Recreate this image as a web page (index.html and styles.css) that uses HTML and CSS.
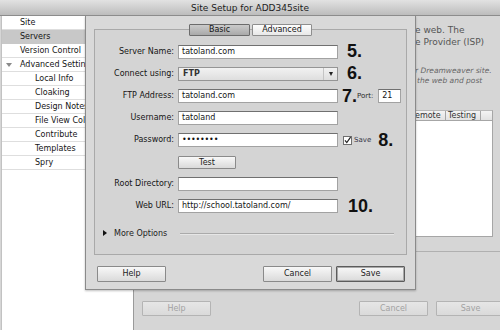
FILE: index.html
```html
<!DOCTYPE html>
<html>
<head>
<meta charset="utf-8">
<link rel="stylesheet" href="styles.css">
</head>
<body>
<div class="window">
  <div class="titlebar">Site Setup for ADD345site</div>
  <div class="body">
    <ul class="sidebar">
      <li>Site</li>
      <li class="sel">Servers</li>
      <li>Version Control</li>
      <li class="group"><span class="disc"></span>Advanced Settings</li>
      <li class="sub">Local Info</li>
      <li class="sub">Cloaking</li>
      <li class="sub">Design Notes</li>
      <li class="sub">File View Columns</li>
      <li class="sub">Contribute</li>
      <li class="sub">Templates</li>
      <li class="sub">Spry</li>
    </ul>
    <div class="panel">
      <div class="intro">
        <p>e web. The</p>
        <p>e Provider (ISP)</p>
      </div>
      <div class="note">
        <p>r Dreamweaver site.</p>
        <p class="indent">the web and post</p>
      </div>
      <div class="table">
        <div class="thead">
          <span class="th c1">emote</span>
          <span class="th c2">Testing</span>
        </div>
        <div class="tbody"></div>
        <div class="tfoot"></div>
      </div>
      <div class="panel-buttons">
        <span class="btn dis">Help</span>
        <span class="spacer"></span>
        <span class="btn dis">Cancel</span>
        <span class="btn dis">Save</span>
      </div>
    </div>
    <div class="sheet">
      <div class="tabs">
        <span class="tab active">Basic</span>
        <span class="tab">Advanced</span>
      </div>
      <div class="groupbox">
        <div class="form">
          <label class="lbl">Server Name:</label>
          <div class="field">tatoland.com</div>
          <div class="extra"><span class="num n5">5.</span></div>

          <label class="lbl">Connect using:</label>
          <div class="select"><span class="sel-text">FTP</span><span class="sel-arrow"><span class="tri-down"></span></span></div>
          <div class="extra"><span class="num n5">6.</span></div>

          <label class="lbl">FTP Address:</label>
          <div class="field">tatoland.com</div>
          <div class="extra"><span class="num">7.</span><span class="small">Port:</span><div class="field port">21</div></div>

          <label class="lbl">Username:</label>
          <div class="field">tatoland</div>
          <div class="extra"></div>

          <label class="lbl">Password:</label>
          <div class="field dots">••••••••</div>
          <div class="extra">
            <svg class="check" width="9" height="9" viewBox="0 0 9 9"><rect x="0.5" y="0.5" width="8" height="8" fill="#fff" stroke="#6f6f6f"/><path d="M2 4.3 L3.8 6.6 L7.6 1.2" fill="none" stroke="#222" stroke-width="1.2"/></svg>
            <span class="small save">Save</span><span class="num n8">8.</span>
          </div>

          <span class="lbl"></span>
          <div class="testrow"><span class="btn test">Test</span></div>
          <div class="extra"></div>

          <label class="lbl">Root Directory:</label>
          <div class="field"></div>
          <div class="extra"></div>

          <label class="lbl">Web URL:</label>
          <div class="field">http://school.tatoland.com/</div>
          <div class="extra"><span class="num n10">10.</span></div>
        </div>
        <div class="more">
          <span class="tri-right"></span>
          <span class="more-text">More Options</span>
          <span class="rule"></span>
        </div>
      </div>
      <div class="sheet-buttons">
        <span class="btn">Help</span>
        <span class="spacer"></span>
        <span class="btn">Cancel</span>
        <span class="btn default">Save</span>
      </div>
    </div>
  </div>
</div>
</body>
</html>
```
FILE: styles.css
```css
* { box-sizing: border-box; }
body {
  margin: 0;
  width: 500px;
  height: 330px;
  overflow: hidden;
  font-family: "DejaVu Sans", sans-serif;
  font-size: 8px;
  color: #151515;
  background: #d6d6d6;
}
p { margin: 0; }
.window {
  width: 500px;
  height: 330px;
  display: flex;
  flex-direction: column;
  overflow: hidden;
}
.titlebar {
  height: 16px;
  flex: none;
  padding-top: 1px;
  background: linear-gradient(#e2e2e2, #bcbcbc);
  border-bottom: 1px solid #8c8c8c;
  text-align: center;
  font-size: 9px;
  line-height: 14px;
  color: #1c1c1c;
}
.body {
  flex: 1;
  display: flex;
  position: relative;
  overflow: hidden;
}
.sidebar {
  width: 133px;
  flex: none;
  margin: 0 0 0 1px;
  padding: 0;
  list-style: none;
  background: #fff;
  border-left: 1px solid #c2c2c2;
  border-right: 1px solid #9a9a9a;
}
.sidebar li {
  height: 14px;
  line-height: 13px;
  border-bottom: 1px solid #dedede;
  padding-left: 18px;
  white-space: nowrap;
  overflow: hidden;
}
.sidebar li.sel { background: #c8c8c8; border-bottom-color: #c8c8c8; }
.sidebar li.group { padding-left: 4px; display: flex; align-items: center; }
.sidebar li.sub { padding-left: 33px; }
.disc {
  width: 0; height: 0;
  border-top: 4px solid #8a8a8a;
  border-left: 3px solid transparent;
  border-right: 3px solid transparent;
  margin-right: 8px;
}
.panel {
  flex: 1;
  display: flex;
  flex-direction: column;
  padding: 8px 7px 14px 8px;
  background: #d6d6d6;
}
.intro, .note, .table { margin-left: 273px; white-space: nowrap; }
.intro { font-size: 9px; line-height: 12px; color: #555; }
.note { margin-top: 18px; font-size: 7.5px; line-height: 10px; font-style: italic; color: #666; }
.note .indent { padding-left: 2px; }
.table { margin-top: 24px; width: 90px; }
.thead {
  height: 10px;
  width: 78px;
  display: flex;
  background: linear-gradient(#f4f4f4, #e2e2e2);
  border-right: 1px solid #a6a6a6;
  border-top: 1px solid #b8b8b8;
  line-height: 9px;
  color: #333;
}
.th { border-right: 1px solid #a6a6a6; }
.c1 { width: 31px; }
.c2 { width: 35px; padding-left: 2px; }
.tbody {
  width: 78px;
  height: 117px;
  background: #fff;
  border-right: 1px solid #a6a6a6;
  border-top: 1px solid #a6a6a6;
  border-bottom: 1px solid #a6a6a6;
}
.tfoot {
  height: 15px;
  width: 90px;
  border-bottom: 1px solid #b0b0b0;
}
.panel-buttons { margin-top: auto; display: flex; gap: 8px; }
.spacer { flex: 1; }
.btn {
  display: block;
  width: 69px;
  height: 16px;
  line-height: 14px;
  text-align: center;
  border: 1px solid #8a8a8a;
  border-radius: 1px;
  background: linear-gradient(#f8f8f8, #dadada);
  color: #222;
}
.btn.dis {
  height: 15px;
  line-height: 13px;
  border-color: #b4b4b4;
  background: linear-gradient(#e6e6e6, #dadada);
  color: #a2a2a2;
}
.btn.default {
  border-color: #5c5c5c;
  box-shadow: inset 0 0 0 1px #a8a8a8;
}
.sheet {
  position: absolute;
  top: 0;
  left: 85px;
  width: 331px;
  height: 274px;
  z-index: 2;
  background: #d9d9d9;
  border: 1px solid #8a8a8a;
  border-top: 0;
  padding: 8px 8px 0 8px;
  display: flex;
  flex-direction: column;
  box-shadow: 0 1px 2px rgba(0,0,0,0.25);
}
.tabs {
  display: flex;
  justify-content: center;
  gap: 2px;
  height: 12px;
  position: relative;
  z-index: 1;
}
.tab {
  width: 61px;
  height: 12px;
  line-height: 10px;
  text-align: center;
  border: 1px solid #8e8e8e;
  border-radius: 1px;
  background: linear-gradient(#fdfdfd, #e8e8e8);
}
.tab + .tab { width: 60px; }
.tab.active {
  background: linear-gradient(#cbcbcb, #a9a9a9);
  border-color: #6c6c6c;
}
.groupbox {
  margin-top: -7px;
  height: 226px;
  border: 1px solid #a9a9a9;
  background: #d4d4d4;
  padding-top: 15px;
}
.form {
  display: grid;
  grid-template-columns: 79px 160px 1fr;
  grid-auto-rows: 14px;
  column-gap: 4px;
  row-gap: 8px;
}
.lbl {
  text-align: right;
  line-height: 14px;
  white-space: nowrap;
  color: #151515;
}
.field {
  height: 14px;
  background: #fff;
  border: 1px solid #a2a2a2;
  border-top-color: #707070;
  padding-left: 3px;
  line-height: 12px;
  white-space: nowrap;
  overflow: hidden;
}
.field.dots { letter-spacing: -0.2px; }
.select {
  height: 14px;
  display: flex;
  border: 1px solid #959595;
  background: linear-gradient(#f2f2f2, #dedede);
  line-height: 12px;
}
.sel-text { flex: 1; padding-left: 4px; font-weight: bold; color: #333; }
.sel-arrow {
  width: 14px;
  border-left: 1px solid #c4c4c4;
  display: flex;
  align-items: center;
  justify-content: center;
}
.tri-down {
  width: 0; height: 0;
  border-top: 4px solid #222;
  border-left: 2.5px solid transparent;
  border-right: 2.5px solid transparent;
}
.extra {
  display: flex;
  align-items: center;
  white-space: nowrap;
}
.num {
  font-family: "Liberation Sans", Arial, sans-serif;
  font-weight: bold;
  font-size: 18px;
  line-height: 14px;
  color: #111;
}
.n5 { margin-left: 5px; margin-top: -3px; }
.n8 { margin-left: 7px; }
.n10 { margin-left: 6px; }
.small { font-size: 7px; color: #2a2a2a; }
.field.port { width: 23px; margin-left: 5px; }
.check { margin-left: 1px; flex: none; }
.save { margin-left: 2px; color: #334; }
.testrow { display: flex; align-items: flex-start; padding-top: 1px; }
.btn.test { width: 58px; height: 13px; line-height: 11px; }
.more {
  margin-top: 14px;
  height: 12px;
  display: flex;
  align-items: center;
  padding-left: 8px;
  padding-right: 12px;
}
.tri-right {
  width: 0; height: 0;
  border-left: 4px solid #111;
  border-top: 3px solid transparent;
  border-bottom: 3px solid transparent;
  margin-right: 7px;
}
.more-text { color: #222; }
.rule {
  flex: 1;
  margin-left: 13px;
  height: 1px;
  background: #aaaaaa;
  box-shadow: 0 1px 0 #e6e6e6;
}
.sheet-buttons {
  margin-top: 11px;
  display: flex;
  gap: 4px;
  padding: 0 2px 0 3px;
}
```
